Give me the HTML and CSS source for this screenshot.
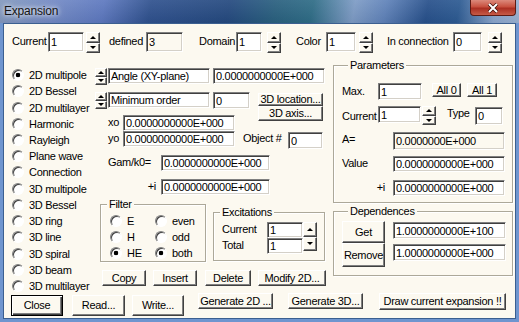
FILE: index.html
```html
<!DOCTYPE html>
<html lang="en">
<head>
  <meta charset="UTF-8" />
  <title>Expansion</title>
  <link rel="stylesheet" href="styles.css">
</head>
<body>
  <div class="window">
    <div class="titlebar">
      <span class="title">Expansion</span>
      <span class="close-box">
        <svg width="12" height="10" viewBox="0 0 12 10"><path d="M2 1 L10 9 M10 1 L2 9" stroke="#3a0d08" stroke-width="3.4"/><path d="M2 1 L10 9 M10 1 L2 9" stroke="#fff" stroke-width="2"/></svg>
      </span>
    </div>
    <div class="frame">
      <div class="client">

        <!-- header fields -->
        <div class="top-row">
          <span class="lbl w36">Current</span>
          <input class="edit w36 h20" value="1">
          <span class="spin w14 h21 ml2"><i class="up"></i><i class="dn"></i></span>
          <span class="lbl w37 ml9">defined</span>
          <input class="edit ro w37 h20" value="3" readonly>
          <span class="lbl w37 ml16">Domain</span>
          <input class="edit w26 h20" value="1">
          <span class="spin w14 h21 ml5"><i class="up"></i><i class="dn"></i></span>
          <span class="lbl w30 ml15">Color</span>
          <input class="edit w30 h20" value="1">
          <span class="spin w14 h21 ml3"><i class="up"></i><i class="dn"></i></span>
          <span class="lbl w66 ml14">In connection</span>
          <input class="edit w29 h20" value="0">
          <span class="spin w14 h21 ml6"><i class="up"></i><i class="dn"></i></span>
        </div>

        <div class="main">
          <!-- expansion kinds -->
          <div class="kinds">
            <label class="radio on"><span class="dot"></span>2D multipole</label>
            <label class="radio"><span class="dot"></span>2D Bessel</label>
            <label class="radio"><span class="dot"></span>2D multilayer</label>
            <label class="radio"><span class="dot"></span>Harmonic</label>
            <label class="radio"><span class="dot"></span>Rayleigh</label>
            <label class="radio"><span class="dot"></span>Plane wave</label>
            <label class="radio"><span class="dot"></span>Connection</label>
            <label class="radio"><span class="dot"></span>3D multipole</label>
            <label class="radio"><span class="dot"></span>3D Bessel</label>
            <label class="radio"><span class="dot"></span>3D ring</label>
            <label class="radio"><span class="dot"></span>3D line</label>
            <label class="radio"><span class="dot"></span>3D spiral</label>
            <label class="radio"><span class="dot"></span>3D beam</label>
            <label class="radio"><span class="dot"></span>3D multilayer</label>
          </div>

          <!-- location and options -->
          <div class="middle">
            <div class="row mt8">
              <span class="spin w12 h17 ml2"><i class="up"></i><i class="dn"></i></span>
              <input class="edit w102 ml1" value="Angle (XY-plane)">
              <input class="edit w112 ml3" value="0.0000000000E+000">
            </div>
            <div class="row h17 mt7">
              <span class="spin w12 h17 ml2"><i class="up"></i><i class="dn"></i></span>
              <input class="edit w102 ml1" value="Minimum order">
              <input class="edit w37 h17 ml3" value="0">
              <div class="stack ml8 mt1">
                <button class="btn w65 h13">3D location...</button>
                <button class="btn w65 h15">3D axis...</button>
              </div>
            </div>
            <div class="row pl15 mt6">
              <span class="lbl w15">xo</span>
              <input class="edit w112" value="0.0000000000E+000">
            </div>
            <div class="row pl15">
              <span class="lbl w15">yo</span>
              <input class="edit w112" value="0.0000000000E+000">
              <span class="lbl w45 ml8">Object #</span>
              <input class="edit w35 h17 mt1" value="0">
            </div>
            <div class="row pl15 mt6">
              <span class="lbl w53">Gam/k0=</span>
              <input class="edit w109" value="0.0000000000E+000">
            </div>
            <div class="row pl15 mt8">
              <span class="lbl w53 right">+i</span>
              <input class="edit w109" value="0.0000000000E+000">
            </div>

            <div class="row mt9">
              <div class="group filter ml7">
                <span class="gtitle">Filter</span>
                <div class="fgrid">
                  <label class="radio"><span class="dot"></span>E</label>
                  <label class="radio"><span class="dot"></span>even</label>
                  <label class="radio"><span class="dot"></span>H</label>
                  <label class="radio"><span class="dot"></span>odd</label>
                  <label class="radio on"><span class="dot"></span>HE</label>
                  <label class="radio on"><span class="dot"></span>both</label>
                </div>
              </div>
              <div class="group excit ml7 mt8">
                <span class="gtitle">Excitations</span>
                <div class="row exrow">
                  <div class="col w45">
                    <span class="lbl">Current</span>
                    <span class="lbl mt2">Total</span>
                  </div>
                  <div class="col">
                    <input class="edit w36" value="1">
                    <input class="edit w36" value="1">
                  </div>
                  <span class="spin w14 h29"><i class="up"></i><i class="dn"></i></span>
                </div>
              </div>
            </div>

            <div class="row mt8 pl9">
              <button class="btn w44">Copy</button>
              <button class="btn w44 ml7">Insert</button>
              <button class="btn w46 ml8">Delete</button>
              <button class="btn w68 ml7">Modify 2D...</button>
            </div>
          </div>

          <!-- parameters and dependences -->
          <div class="side">
            <div class="group params mt5">
              <span class="gtitle">Parameters</span>
              <div class="row mt11">
                <span class="lbl w36 mt1">Max.</span>
                <input class="edit w44 h17" value="1">
                <button class="btn w29 h14 ml10">All 0</button>
                <button class="btn w30 h14 ml6">All 1</button>
              </div>
              <div class="row mt6">
                <span class="lbl w36 mt3">Current</span>
                <input class="edit w43 h17" value="1">
                <span class="spin w14 h19 ml1"><i class="up"></i><i class="dn"></i></span>
                <span class="lbl w28 ml11">Type</span>
                <input class="edit w28 h18 mt1" value="0">
              </div>
              <div class="row mt7">
                <span class="lbl w51">A=</span>
                <input class="edit ro w112 h18" value="0.0000000E+000" readonly>
              </div>
              <div class="row mt6">
                <span class="lbl w51">Value</span>
                <input class="edit w112" value="0.0000000000E+000">
              </div>
              <div class="row mt8">
                <span class="lbl w51 right pr8">+i</span>
                <input class="edit w112" value="0.0000000000E+000">
              </div>
            </div>

            <div class="group deps mt8">
              <span class="gtitle">Dependences</span>
              <div class="row mt3">
                <div class="col w43">
                  <button class="btn h22">Get</button>
                  <button class="btn h24">Remove</button>
                </div>
                <div class="col ml8">
                  <input class="edit w113 h17 mt1" value="1.0000000000E+100">
                  <input class="edit w113 h17 mt5" value="1.0000000000E+000">
                </div>
              </div>
            </div>
          </div>
        </div>

        <!-- dialog buttons -->
        <div class="bottom-row">
          <button class="btn default w52 h21 ml7 mt2">Close</button>
          <button class="btn w53 h21 ml9 mt2">Read...</button>
          <button class="btn w52 h21 ml7 mt2">Write...</button>
          <button class="btn w75 ml14">Generate 2D ...</button>
          <button class="btn w75 ml15">Generate 3D...</button>
          <button class="btn w127 h17 ml16">Draw current expansion !!</button>
        </div>

      </div>
    </div>
  </div>
</body>
</html>
```

FILE: styles.css
```css
* {
  box-sizing: border-box;
}

html, body {
  margin: 0;
}

body {
  width: 519px;
  height: 322px;
  overflow: hidden;
  font-family: "Liberation Sans", Arial, sans-serif;
  font-size: 11px;
  letter-spacing: -0.3px;
  color: #000;
  background: #6f95cf;
}

.window {
  width: 519px;
  height: 322px;
  display: flex;
  flex-direction: column;
}

/* title bar */
.titlebar {
  height: 23px;
  flex: none;
  display: flex;
  justify-content: space-between;
  background:
    linear-gradient(180deg, rgba(255,255,255,0.08), rgba(0,0,0,0.05)),
    linear-gradient(100deg, #8298bd 0%, #7088c4 11%, #5d78bf 20%, #2f518e 29%, #24497f 44%, #29607f 53%, #2e6c86 60%, #7d9bc5 68%, #5f82b9 74%, #27508b 82%, #2c5a92 88%, #8aa5cc 95%, #9ab2d3 100%);
}

.title {
  font-size: 12px;
  letter-spacing: -0.2px;
  padding: 4px 0 0 4px;
  color: #141414;
  text-shadow: 0 0 4px #fff, 0 0 8px rgba(255,255,255,0.7);
}

.close-box {
  width: 46px;
  height: 16px;
  margin-right: 3px;
  display: flex;
  align-items: center;
  justify-content: center;
  border: 1px solid #5e1b14;
  border-top: none;
  border-radius: 0 0 4px 4px;
  background: linear-gradient(180deg, #dc8a7c 0%, #c8503f 45%, #ab2f22 55%, #c65b47 100%);
}

.frame {
  flex: 1;
  padding: 0 3px 3px;
  background: #6f95cf;
}

.client {
  height: 100%;
  background: #fcf9f0;
  border: 1px solid #3b5f90;
}

/* generic controls */
.lbl {
  display: block;
  flex: none;
  line-height: 14px;
  white-space: nowrap;
}

.right {
  text-align: right;
  padding-right: 5px;
}

.edit {
  display: block;
  flex: none;
  height: 16px;
  margin: 0;
  padding: 0 2px;
  font: inherit;
  letter-spacing: inherit;
  color: #000;
  background: #fff;
  border: 1px solid;
  border-color: #808080 #fff #fff #808080;
  box-shadow: inset 1px 1px #404040, inset -1px -1px #d4d0c8;
  outline: none;
}

.edit.ro {
  background: #fcf9f0;
}

.btn {
  display: block;
  flex: none;
  height: 16px;
  margin: 0;
  padding: 0;
  font: inherit;
  letter-spacing: inherit;
  line-height: 1;
  color: #000;
  background: #fcf9f0;
  border: 1px solid;
  border-color: #fff #404040 #404040 #fff;
  box-shadow: inset -1px -1px #808080;
}

.btn.default {
  border: 1px solid #000;
  box-shadow: inset 1px 1px #fff, inset -1px -1px #404040, inset -2px -2px #808080;
}

.spin {
  display: flex;
  flex: none;
  flex-direction: column;
}

.spin i {
  flex: 1;
  display: flex;
  align-items: center;
  justify-content: center;
  background: #fcf9f0;
  border: 1px solid;
  border-color: #fff #404040 #404040 #fff;
  box-shadow: inset -1px -1px #808080;
}

.spin .up::after,
.spin .dn::after {
  content: "";
  border-left: 3px solid transparent;
  border-right: 3px solid transparent;
}

.spin .up::after {
  border-bottom: 3px solid #000;
}

.spin .dn::after {
  border-top: 3px solid #000;
}

.radio {
  display: flex;
  align-items: center;
  gap: 5px;
  white-space: nowrap;
}

.dot {
  width: 12px;
  height: 12px;
  flex: none;
  border-radius: 50%;
  background: #fff;
  border: 1px solid;
  border-color: #808080 #fff #fff #808080;
  box-shadow: inset 1px 1px #404040;
}

.radio.on .dot {
  background: radial-gradient(circle, #000 0 2px, #fff 2.6px);
}

.group {
  flex: none;
  border: 1px solid #aca899;
  box-shadow: inset 1px 1px #fff, 1px 1px #fff;
}

.gtitle {
  display: table;
  margin: -7px 0 0 6px;
  padding: 0 2px;
  line-height: 13px;
  background: #fcf9f0;
}

.row {
  display: flex;
  align-items: flex-start;
}

.col {
  display: flex;
  flex-direction: column;
  flex: none;
}

.stack {
  display: flex;
  flex-direction: column;
}

/* layout blocks */
.top-row {
  display: flex;
  align-items: flex-start;
  height: 21px;
  margin-top: 8px;
  padding-left: 8px;
}

.top-row .lbl {
  padding-top: 2px;
}

.main {
  display: flex;
  height: 233px;
  margin-top: 7px;
}

.kinds {
  width: 89px;
  flex: none;
  display: grid;
  grid-auto-rows: 16.23px;
  align-content: start;
  padding: 7px 0 0 8px;
}

.middle {
  width: 237px;
  flex: none;
}

.side {
  width: 185px;
  flex: none;
  padding-left: 3px;
}

.filter {
  width: 106px;
  height: 58px;
}

.fgrid {
  display: grid;
  grid-template-columns: 45px auto;
  grid-auto-rows: 16px;
  margin: 2px 0 0 9px;
}

.excit {
  width: 112px;
  height: 49px;
}

.exrow {
  margin: 3px 0 0 8px;
}

.params {
  width: 180px;
  height: 138px;
  padding-left: 8px;
}

.deps {
  width: 180px;
  height: 65px;
  padding-left: 8px;
}

.bottom-row {
  display: flex;
  align-items: flex-start;
}

/* sizes */
.w12 { width: 12px; }
.w14 { width: 14px; }
.w15 { width: 15px; }
.w26 { width: 26px; }
.w28 { width: 28px; }
.w29 { width: 29px; }
.w30 { width: 30px; }
.w35 { width: 35px; }
.w36 { width: 36px; }
.w37 { width: 37px; }
.w43 { width: 43px; }
.w44 { width: 44px; }
.w45 { width: 45px; }
.w46 { width: 46px; }
.w51 { width: 51px; }
.w52 { width: 52px; }
.w53 { width: 53px; }
.w65 { width: 65px; }
.w66 { width: 66px; }
.w68 { width: 68px; }
.w75 { width: 75px; }
.w102 { width: 102px; }
.w109 { width: 109px; }
.w112 { width: 112px; }
.w113 { width: 113px; }
.w127 { width: 127px; }

.h13 { height: 13px; }
.h14 { height: 14px; }
.h15 { height: 15px; }
.h17 { height: 17px; }
.h18 { height: 18px; }
.h19 { height: 19px; }
.h20 { height: 20px; }
.h21 { height: 21px; }
.h22 { height: 22px; }
.h24 { height: 24px; }
.h29 { height: 29px; }

.ml1 { margin-left: 1px; }
.ml2 { margin-left: 2px; }
.ml3 { margin-left: 3px; }
.ml5 { margin-left: 5px; }
.ml6 { margin-left: 6px; }
.ml7 { margin-left: 7px; }
.ml8 { margin-left: 8px; }
.ml9 { margin-left: 9px; }
.ml10 { margin-left: 10px; }
.ml11 { margin-left: 11px; }
.ml14 { margin-left: 14px; }
.ml15 { margin-left: 15px; }
.ml16 { margin-left: 16px; }

.mt1 { margin-top: 1px; }
.mt2 { margin-top: 2px; }
.mt3 { margin-top: 3px; }
.mt5 { margin-top: 5px; }
.mt6 { margin-top: 6px; }
.mt7 { margin-top: 7px; }
.mt8 { margin-top: 8px; }
.mt9 { margin-top: 9px; }
.mt11 { margin-top: 11px; }

.pl9 { padding-left: 9px; }
.pl15 { padding-left: 15px; }
.pr8 { padding-right: 8px; }
```
